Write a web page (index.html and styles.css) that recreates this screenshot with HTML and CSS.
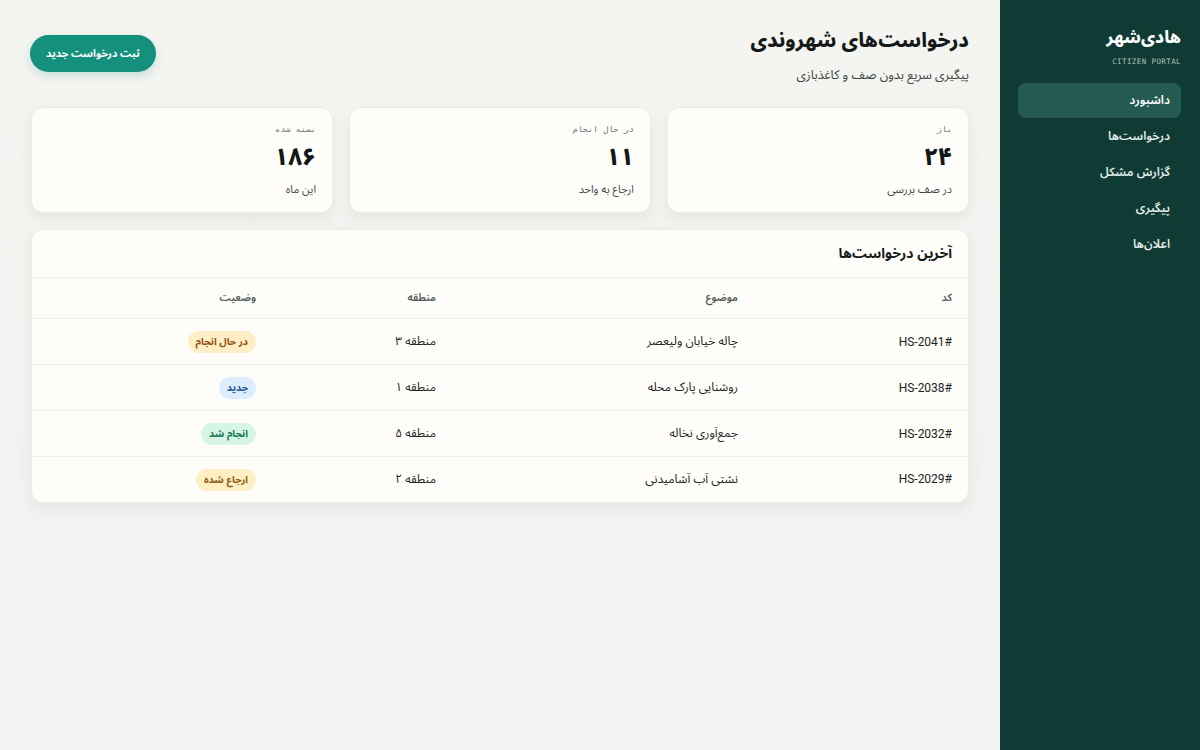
FILE: index.html
```html
<!DOCTYPE html>
<html lang="fa" dir="rtl">
<head>
<meta charset="utf-8">
<title>هادی‌شهر</title>
<link rel="stylesheet" href="styles.css">
</head>
<body>
<div class="app">
  <aside class="sidebar">
    <div class="brand">هادی‌شهر</div>
    <div class="brand-sub">CITIZEN PORTAL</div>
    <nav class="nav">
      <a class="nav-item active">داشبورد</a>
      <a class="nav-item">درخواست‌ها</a>
      <a class="nav-item">گزارش مشکل</a>
      <a class="nav-item">پیگیری</a>
      <a class="nav-item">اعلان‌ها</a>
    </nav>
  </aside>
  <main class="main">
    <header class="head">
      <div class="head-text">
        <h1 class="title">درخواست‌های شهروندی</h1>
        <p class="subtitle">پیگیری سریع بدون صف و کاغذبازی</p>
      </div>
      <button class="btn">ثبت درخواست جدید</button>
    </header>
    <section class="stats">
      <div class="card stat">
        <div class="stat-label">باز</div>
        <div class="stat-num">۲۴</div>
        <div class="stat-sub">در صف بررسی</div>
      </div>
      <div class="card stat">
        <div class="stat-label">در حال انجام</div>
        <div class="stat-num">۱۱</div>
        <div class="stat-sub">ارجاع به واحد</div>
      </div>
      <div class="card stat">
        <div class="stat-label">بسته شده</div>
        <div class="stat-num">۱۸۶</div>
        <div class="stat-sub">این ماه</div>
      </div>
    </section>
    <section class="card table-card">
      <h2 class="table-title">آخرین درخواست‌ها</h2>
      <table class="table">
        <thead>
          <tr><th class="c-code">کد</th><th class="c-topic">موضوع</th><th class="c-zone">منطقه</th><th class="c-status">وضعیت</th></tr>
        </thead>
        <tbody>
          <tr><td class="code">#HS-2041</td><td>چاله خیابان ولیعصر</td><td>منطقه ۳</td><td><span class="badge progress">در حال انجام</span></td></tr>
          <tr><td class="code">#HS-2038</td><td>روشنایی پارک محله</td><td>منطقه ۱</td><td><span class="badge new">جدید</span></td></tr>
          <tr><td class="code">#HS-2032</td><td>جمع‌آوری نخاله</td><td>منطقه ۵</td><td><span class="badge done">انجام شد</span></td></tr>
          <tr><td class="code">#HS-2029</td><td>نشتی آب آشامیدنی</td><td>منطقه ۲</td><td><span class="badge referred">ارجاع شده</span></td></tr>
        </tbody>
      </table>
    </section>
  </main>
</div>
</body>
</html>
```

FILE: styles.css
```css
* { box-sizing: border-box; }
html, body { margin: 0; padding: 0; }
body {
  font-family: "Noto Sans Arabic", "Noto Sans", "DejaVu Sans", sans-serif;
  color: #1c2422;
  background: #f4f4f1;
}
.app {
  display: flex;
  flex-direction: row;
  width: 1200px;
  height: 750px;
}
.sidebar {
  width: 200px;
  flex: 0 0 200px;
  background: #0f3b34;
  color: #e6efec;
  padding: 24px 19px 0 18px;
}
.brand {
  font-size: 17px;
  font-weight: 800;
  color: #ffffff;
  line-height: 28px;
}
.brand-sub {
  font-family: "DejaVu Sans Mono", "Liberation Mono", monospace;
  font-size: 7.5px;
  letter-spacing: 0.4px;
  color: #a9c2bb;
  margin-top: 4px;
  line-height: 12px;
}
.nav {
  display: flex;
  flex-direction: column;
  gap: 1px;
  margin-top: 15px;
}
.nav-item {
  display: block;
  height: 35px;
  line-height: 35px;
  padding: 0 11px;
  border-radius: 8px;
  font-size: 12px;
  font-weight: 600;
  color: #e3ece9;
}
.nav-item.active {
  background: #245a51;
  color: #ffffff;
}
.main {
  flex: 1;
  padding: 26px 31px 0 31px;
  background: linear-gradient(180deg, #f4f4f1 0%, #f1f3f0 100%);
}
.head {
  display: flex;
  justify-content: space-between;
  align-items: flex-start;
}
.title {
  margin: 0;
  font-size: 20px;
  font-weight: 800;
  line-height: 30px;
  color: #141a19;
}
.subtitle {
  margin: 10px 0 0;
  font-size: 12.5px;
  color: #3a4643;
  line-height: 18px;
}
.btn {
  margin-top: 9px;
  margin-left: -1px;
  font-family: inherit;
  font-size: 10.5px;
  font-weight: 700;
  color: #ffffff;
  background: #14907c;
  border: none;
  border-radius: 19px;
  height: 37px;
  padding: 0 16px;
  box-shadow: 0 4px 10px rgba(20, 144, 124, 0.2);
}
.card {
  background: #fffdfa;
  border: 1px solid #ecebe6;
  border-radius: 12px;
  box-shadow: 0 6px 14px rgba(40, 50, 45, 0.07);
}
.stats {
  display: grid;
  grid-template-columns: repeat(3, 1fr);
  gap: 16px;
  margin-top: 23px;
}
.stat {
  height: 106px;
  padding: 14px 16px 0;
}
.stat-label {
  font-family: "DejaVu Sans Mono", "Liberation Mono", monospace;
  font-size: 8.5px;
  letter-spacing: 2px;
  color: #6d7a77;
  line-height: 14px;
}
.stat-num {
  font-size: 24px;
  font-weight: 800;
  color: #111716;
  line-height: 26px;
  margin-top: 9px;
}
.stat-sub {
  font-size: 11px;
  color: #3f4a48;
  margin-top: 11px;
  line-height: 16px;
}
.table-card {
  margin-top: 16px;
  overflow: hidden;
}
.table-title {
  margin: 0;
  font-size: 14px;
  font-weight: 700;
  line-height: 20px;
  padding: 14px 16px 13px;
  color: #141a19;
}
.table {
  width: 100%;
  border-collapse: collapse;
}
.table th, .table td {
  text-align: right;
  padding: 0 16px;
  border-top: 1px solid #eeede8;
}
.table th {
  height: 41px;
  font-size: 10.5px;
  font-weight: 600;
  color: #4f5b58;
}
.table td {
  height: 46px;
  font-size: 12px;
  color: #1c2422;
}
.table tbody tr:last-child td { height: 45px; }
.c-code { width: 214px; }
.c-topic { width: 302px; }
.c-zone { width: 180px; }
.code {
  font-family: "Roboto", "Liberation Sans", sans-serif;
}
.badge {
  display: inline-block;
  font-size: 10px;
  font-weight: 700;
  padding: 0 8px;
  height: 22px;
  line-height: 22px;
  border-radius: 11px;
}
.badge.progress { background: #fdeec6; color: #94500f; }
.badge.new { background: #dcedfd; color: #1f5690; }
.badge.done { background: #d5f5e5; color: #17744d; }
.badge.referred { background: #fdefc2; color: #8a5b12; }
```
